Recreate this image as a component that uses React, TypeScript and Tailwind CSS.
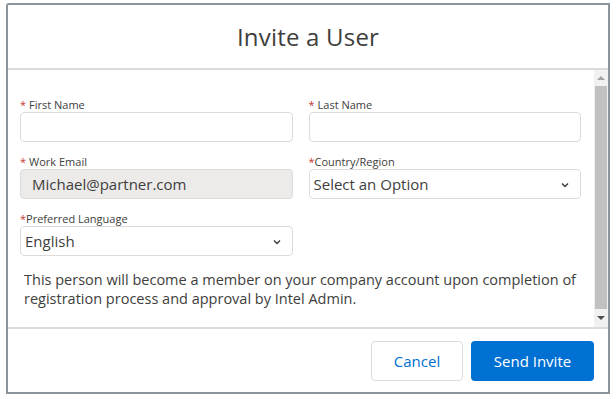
import React from 'react'

function Label({ text, spaced = true }: { text: string; spaced?: boolean }) {
  return (
    <div className="h-[15px] text-[11px] leading-[15px] text-[#3e3e3c] mb-[0px]">
      <span className="text-[#c23934]">*</span>
      {spaced ? <span className="ml-[3px]">{text}</span> : <span>{text}</span>}
    </div>
  )
}

function Chevron() {
  return (
    <svg width="10" height="10" viewBox="0 0 10 10" className="absolute right-[10px] top-[10px]">
      <path d="M2 3.5 L5 6.5 L8 3.5" fill="none" stroke="#3e3e3c" strokeWidth="1.5" />
    </svg>
  )
}

export default function App() {
  return (
    <div className="w-[616px] h-[399px] bg-white pt-[3px] pl-[6px] font-['Open_Sans',sans-serif]">
      <div className="w-[604px] h-[391px] border-2 border-[#8c949c] rounded-tl-[3px] bg-white flex flex-col overflow-hidden">
        {/* header */}
        <div className="h-[65px] border-b-2 border-[#dddbda] flex items-center justify-center">
          <h1 className="text-[24px] text-[#3e3e3c] font-normal tracking-[0.2px]">Invite a User</h1>
        </div>

        {/* body */}
        <div className="h-[257px] flex">
          <div className="flex-1 pl-[12px] pr-[13px] pt-[27px]">
            <div className="grid grid-cols-2 gap-x-[16px] gap-y-[12px]">
              <div>
                <Label text="First Name" />
                <div className="h-[30px] border border-[#dddbda] rounded-[4px] bg-white" />
              </div>
              <div>
                <Label text="Last Name" />
                <div className="h-[30px] border border-[#dddbda] rounded-[4px] bg-white" />
              </div>
              <div>
                <Label text="Work Email" />
                <div className="h-[30px] border border-[#dddbda] rounded-[4px] bg-[#ecebea] pl-[11px] flex items-center text-[15px] text-[#3e3e3c]">
                  Michael@partner.com
                </div>
              </div>
              <div>
                <Label text="Country/Region" spaced={false} />
                <div className="relative h-[30px] border border-[#dddbda] rounded-[4px] bg-white pl-[4px] flex items-center text-[15px] text-[#3e3e3c]">
                  Select an Option
                  <Chevron />
                </div>
              </div>
              <div>
                <Label text="Preferred Language" spaced={false} />
                <div className="relative h-[30px] border border-[#dddbda] rounded-[4px] bg-white pl-[4px] flex items-center text-[15px] text-[#3e3e3c]">
                  English
                  <Chevron />
                </div>
              </div>
            </div>
            <p className="mt-[14px] pl-[4px] text-[14.5px] leading-[19px] text-[#3e3e3c]">
              This person will become a member on your company account upon completion of registration process and approval by Intel Admin.
            </p>
          </div>

          {/* scrollbar */}
          <div className="w-[14px] bg-[#f1f1f1] flex flex-col items-center">
            <div className="h-[15px] flex items-center justify-center">
              <svg width="8" height="5" viewBox="0 0 8 5"><path d="M0 5 L4 1 L8 5 Z" fill="#a3a3a3" /></svg>
            </div>
            <div className="w-[12px] flex-1 bg-[#c1c1c1] my-[1px]" />
            <div className="h-[17px] flex items-center justify-center">
              <svg width="8" height="5" viewBox="0 0 8 5"><path d="M0 0 L4 4 L8 0 Z" fill="#505050" /></svg>
            </div>
          </div>
        </div>

        {/* footer */}
        <div className="flex-1 border-t-2 border-[#dddbda] flex justify-end items-start pt-[12px] pr-[14px] gap-[8px]">
          <button className="w-[92px] h-[40px] border border-[#dddbda] rounded-[4px] bg-white text-[15px] text-[#0070d2]">
            Cancel
          </button>
          <button className="w-[123px] h-[40px] rounded-[4px] bg-[#0070d2] text-[15px] text-white">
            Send Invite
          </button>
        </div>
      </div>
    </div>
  )
}
